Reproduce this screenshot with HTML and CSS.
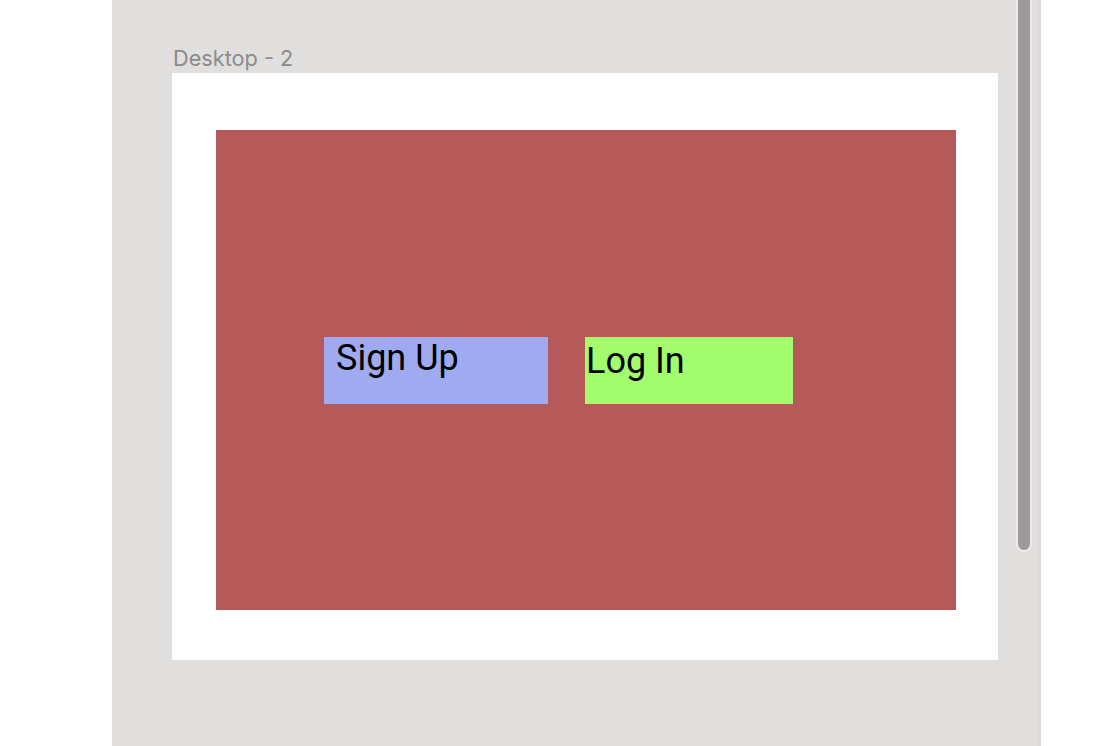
FILE: index.html
```html
<!DOCTYPE html>
<html>
<head>
<meta charset="utf-8">
<link rel="stylesheet" href="styles.css">
</head>
<body>
<div class="app">
  <div class="left-pane"></div>
  <div class="canvas">
    <div class="frame-label">Desktop - 2</div>
    <div class="frame">
      <div class="hero">
        <div class="btn btn-signup">Sign Up</div>
        <div class="btn btn-login">Log In</div>
      </div>
    </div>
    <div class="scrollbar"><div class="thumb"></div></div>
  </div>
  <div class="right-pane"></div>
</div>
</body>
</html>
```
FILE: styles.css
```css
html, body {
  margin: 0;
  padding: 0;
  background: #ffffff;
  overflow: hidden;
}
.app {
  display: flex;
  width: 1118px;
  height: 746px;
}
.left-pane {
  width: 112px;
  flex: none;
  background: #ffffff;
}
.canvas {
  position: relative;
  width: 929px;
  flex: none;
  background: #e0dfde;
  border-right: 2px solid #dcdbda;
  padding: 44px 0 0 60px;
  box-sizing: border-box;
}
.right-pane {
  flex: 1;
  background: #ffffff;
}
.frame-label {
  font-family: Inter, "Noto Sans", sans-serif;
  font-size: 21.7px;
  line-height: 29px;
  color: #8b8b8b;
  margin-left: 1px;
  height: 29px;
}
.frame {
  width: 826px;
  height: 587px;
  background: #ffffff;
  padding: 57px 0 0 44px;
  box-sizing: border-box;
}
.hero {
  width: 740px;
  height: 480px;
  background: #b55a59;
  display: flex;
  gap: 37px;
  padding: 207px 0 0 108px;
  box-sizing: border-box;
  align-items: flex-start;
}
.btn {
  height: 67px;
  font-family: Roboto, "Liberation Sans", sans-serif;
  font-size: 36px;
  line-height: 42px;
  color: #000000;
  box-sizing: border-box;
}
.btn-signup {
  width: 224px;
  background: #a0aaf0;
  padding: 0 0 0 12px;
}
.btn-login {
  width: 208px;
  background: #a2fc6c;
  padding: 3px 0 0 1px;
}
.scrollbar {
  position: absolute;
  top: 0;
  left: 904px;
  width: 16px;
  height: 553px;
}
.thumb {
  width: 12px;
  height: 550px;
  background: #9c9a9b;
  border: 2px solid #ecebea;
  border-top: none;
  border-radius: 0 0 8px 8px;
  box-sizing: content-box;
}
```
